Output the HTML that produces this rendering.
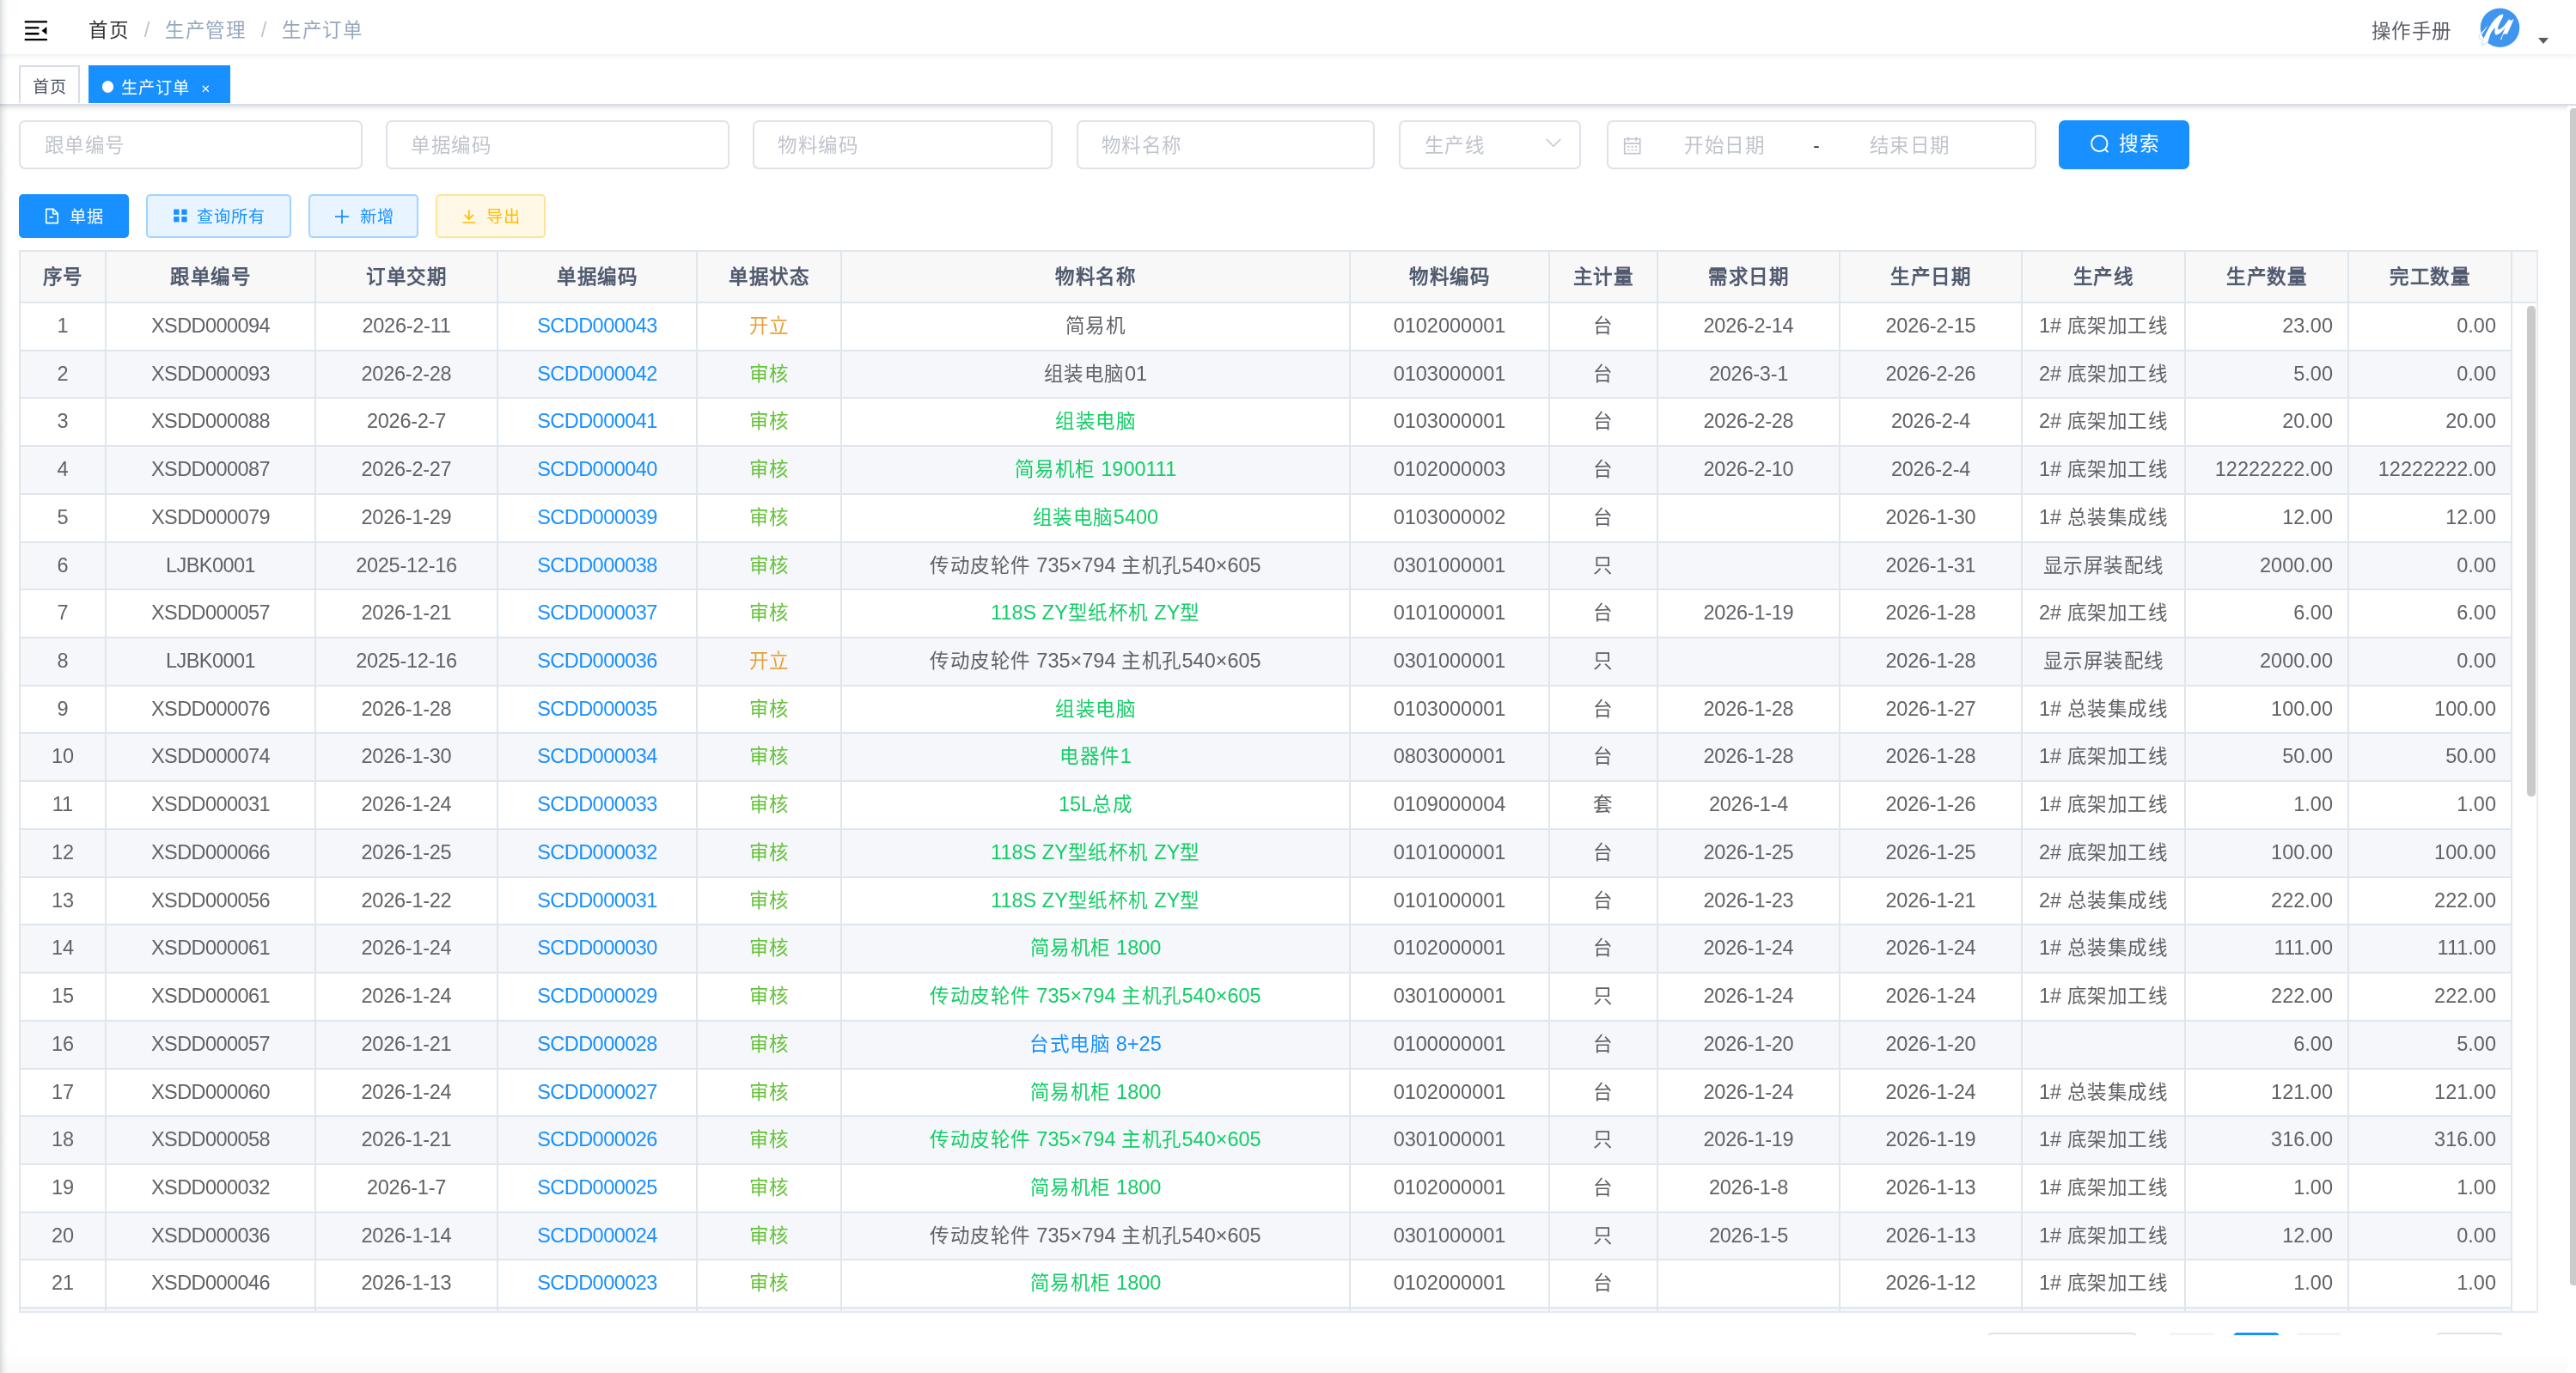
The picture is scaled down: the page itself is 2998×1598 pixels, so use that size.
<!DOCTYPE html>
<html lang="zh-CN"><head><meta charset="utf-8"><title>生产订单</title>
<style>
*{box-sizing:border-box;margin:0;padding:0}
html,body{width:2998px;height:1598px;overflow:hidden;background:#fff}
body{position:relative;font-family:"Liberation Sans",sans-serif;color:#606266;font-size:23.5px}
.abs{position:absolute}
/* navbar */
.nav{position:absolute;left:0;top:0;width:2998px;height:63px;background:#fff;box-shadow:0 2px 7px rgba(0,21,41,.08);z-index:5}
.hb{position:absolute;left:25px;top:19px;width:33.6px;height:33.6px;transform:rotate(180deg)}
.bc{position:absolute;left:103px;top:0;height:63px;line-height:70.5px;white-space:nowrap;font-size:23.5px;color:#97a8be}
.bc b{font-weight:400;color:#303133}
.bc i{display:inline-block;width:42px;text-align:center;font-style:normal;font-weight:400;color:#c0c4cc}
.man{position:absolute;left:2759.5px;top:0;line-height:74.5px;font-size:23.5px;color:#5a5e66;white-space:nowrap}
.ava{position:absolute;left:2875px;top:2px;width:70px;height:60px}
.caret{position:absolute;left:2954px;top:44px;width:0;height:0;border-left:6.2px solid transparent;border-right:6.2px solid transparent;border-top:7.4px solid #555a64}
/* tags */
.tags{position:absolute;left:0;top:63px;width:2998px;height:60px;background:#fff;border-bottom:2px solid #d8dce5;box-shadow:0 2px 6px rgba(0,0,0,.13),0 0 5px rgba(0,0,0,.04);z-index:4}
.tag{position:absolute;top:13px;height:44px;line-height:53px;font-size:20px;white-space:nowrap}
.t1{left:22px;width:71px;border:2px solid #d8dce5;color:#495060;text-align:center;line-height:48.5px;height:44px;border-bottom:0}
.t2{left:103px;width:165px;background:#1890ff;color:#fff}
.t2 .dot{position:absolute;left:15.8px;top:18.2px;width:13.4px;height:13.4px;border-radius:50%;background:#fff}
.t2 span{position:absolute;left:37.7px;top:0}
.t2 svg{position:absolute;left:131.6px;top:23.2px;width:8.6px;height:8.6px}
/* main */
.inp{position:absolute;top:140px;height:56.5px;border:2px solid #dfe2e8;border-radius:7px;background:#fff;color:#c0c4cc;font-size:23.5px;line-height:55px;padding-left:27.3px;white-space:nowrap}
.btn{position:absolute;top:226px;height:51px;border-radius:5px;font-size:20px;line-height:50px;white-space:nowrap;border:2px solid transparent}
.btn span{position:absolute;top:0}
.btn svg{position:absolute}
.b1{left:22px;width:128px;background:#1890ff;color:#fff;border-color:#1890ff}
.b2{left:170.4px;width:168.2px;background:#e8f4ff;color:#1890ff;border-color:#a3d3ff}
.b3{left:359.1px;width:127.7px;background:#e8f4ff;color:#1890ff;border-color:#a3d3ff}
.b4{left:507.3px;width:127.4px;background:#fff8e6;color:#ffba00;border-color:#ffe399}
.sbtn{position:absolute;left:2396px;top:140px;width:152px;height:57px;border-radius:7px;background:#1890ff;color:#fff;font-size:23.5px;line-height:56px}
/* table */
.tw{position:absolute;left:22px;top:291px;width:2932px;height:1237px;overflow:hidden;border-left:2px solid #dfe6ec;border-top:2px solid #dfe6ec}
.th{position:absolute;left:0;top:0;width:2930px;height:60px;background:#f8f8f9;border-bottom:2px solid #dfe6ec;display:flex;font-weight:700;color:#515a6e}
.th .c{height:58px;line-height:59px;border-right:2px solid #dfe6ec;text-align:center}
.tr{position:absolute;left:0;width:2900px;height:55.72px;display:flex;background:#fff;border-bottom:2px solid #dfe6ec}
.tr.s{background:#f5f7fa}
.c{flex:none;white-space:nowrap;overflow:hidden}
.tr .c{height:100%;line-height:53.6px;border-right:2px solid #dfe6ec;text-align:center}
.tr .r{text-align:right;padding-right:17px}
.k{letter-spacing:-.55px}
.d{letter-spacing:-.25px}
.l{color:#1890ff;letter-spacing:-.55px}
.o{color:#e6a23c}.v{color:#67c23a}
.ng{color:#13ce66}.nb{color:#1890ff}
.trb{position:absolute;right:0;top:0;width:2px;height:100%;background:#e6ebf5}
.tbb{position:absolute;left:0;right:0;bottom:0;height:2px;background:#e3e9f1}
.isb{position:absolute;left:2917px;top:63px;width:10px;height:571px;border-radius:4.5px;background:#cacaca}
/* pagination sliver */
.pg{position:absolute;top:1551px;height:30px;border-radius:5px}
.clip{position:absolute;left:0;top:1554px;width:2998px;height:44px;background:linear-gradient(#fff 45%,#fafafa);z-index:3}
/* edges */
.lsh{position:absolute;left:0;top:0;width:9px;height:1598px;background:linear-gradient(90deg,rgba(0,21,41,.15),rgba(0,21,41,.06) 42%,rgba(0,21,41,0));z-index:9}
.psb{position:absolute;left:2991px;top:126px;width:10px;height:1370px;border-radius:4px;background:#cbcbcb;z-index:5}

#app{position:absolute;left:0;top:0;width:2998px;height:1598px;overflow:hidden;will-change:transform;background:#fff}
.ptr{position:absolute;left:2988px;top:123px;width:10px;height:1475px;background:#fff;z-index:4}
.z{font-size:22.5px;letter-spacing:.5px}
.th .c{font-size:22.5px;letter-spacing:.5px}
.bc{font-size:22.5px!important;letter-spacing:.5px}
.bc i{letter-spacing:0;font-size:23.5px}
.man{font-size:22.5px!important;letter-spacing:.5px}
.inp{font-size:22.5px!important;letter-spacing:.5px}
.sbtn{font-size:22.5px!important;letter-spacing:.5px}
.tag,.btn{font-size:19.2px!important;letter-spacing:1px}

</style></head>
<body>
<div id="app">
<div class="nav">
  <svg class="hb" viewBox="0 0 1024 1024"><path fill="#000" d="M408 442h480c4.400 0 8-3.600 8-8v-56c0-4.400-3.600-8-8-8H408c-4.400 0-8 3.600-8 8v56c0 4.400 3.600 8 8 8zm-8 204c0 4.400 3.600 8 8 8h480c4.400 0 8-3.600 8-8v-56c0-4.400-3.600-8-8-8H408c-4.400 0-8 3.600-8 8v56zm504-486H120c-4.400 0-8 3.600-8 8v56c0 4.400 3.600 8 8 8h784c4.400 0 8-3.600 8-8v-56c0-4.400-3.600-8-8-8zm0 632H120c-4.400 0-8 3.600-8 8v56c0 4.400 3.600 8 8 8h784c4.400 0 8-3.600 8-8v-56c0-4.400-3.600-8-8-8zM142.400 642.100L298.700 519a8.840 8.840 0 0 0 0-13.900L142.400 381.900c-5.800-4.600-14.400-.5-14.400 6.900v246.300a8.900 8.900 0 0 0 14.400 7z"/></svg>
  <div class="bc"><b>首页</b><i>/</i>生产管理<i>/</i>生产订单</div>
  <div class="man">操作手册</div>
  <svg class="ava" viewBox="0 0 1602 1373">
    <circle cx="790" cy="692" r="522" fill="#4095ee"/>
    <path fill="#fff" d="M470 1085C485 1000 520 890 575 790C600 745 640 710 668 692C650 740 640 800 655 845C670 885 700 890 740 870C800 840 880 760 935 690C905 750 870 830 850 890C835 935 810 975 800 1000L835 1005C845 960 860 910 880 870L905 860L980 865C1010 800 1060 700 1100 600C1120 550 1145 490 1160 455L1100 492L1068 502L1040 465C1010 490 985 530 950 575C900 640 830 710 770 740C745 750 730 730 735 690C745 630 800 530 850 440C870 400 890 365 870 345C850 330 810 340 780 360C700 410 620 500 560 590C500 690 420 840 350 980C330 1020 310 1060 300 1090L330 1150L440 1090Z"/>
    <path fill="#fff" d="M472 622C450 665 385 760 318 862L272 850C330 785 405 700 472 622Z"/>
    <path fill="none" stroke="#4095ee" stroke-opacity=".7" stroke-width="13" stroke-dasharray="30 12" d="M285 835C235 880 215 935 240 980C262 1010 300 990 330 955M305 1000L345 1040L285 1100L345 1120L310 1180L445 1085"/>
  </svg>
  <div class="caret"></div>
</div>
<div class="tags">
  <div class="tag t1">首页</div>
  <div class="tag t2"><div class="dot"></div><span>生产订单</span><svg viewBox="0 0 9 9"><path d="M.8.8l7.400 7.400M8.200.8L.8 8.200" stroke="#fff" stroke-width="1.300" fill="none"/></svg></div>
</div>

<div class="inp" style="left:22.3px;width:399.3px">跟单编号</div>
<div class="inp" style="left:449px;width:399.600px">单据编码</div>
<div class="inp" style="left:875.9px;width:349.400px">物料编码</div>
<div class="inp" style="left:1252.5px;width:347.900px">物料名称</div>
<div class="inp" style="left:1628.3px;width:211.300px">生产线<svg class="abs" style="left:167px;top:16px;width:22px;height:16px" viewBox="0 0 22 16"><path d="M2.700 3.800L11 12.200L19.300 3.800" fill="none" stroke="#c0c4cc" stroke-width="1.500"/></svg></div>
<div class="inp" style="left:1870.3px;width:499.400px;padding-left:0">
  <svg class="abs" style="left:15.5px;top:15.5px;width:23px;height:23px" viewBox="0 0 24 24" fill="none" stroke="#c0c4cc" stroke-width="1.700"><rect x="2.800" y="3.800" width="18.800" height="17.800"/><path d="M2.800 9.300h18.800M7.500 1.500v5M16.900 1.500v5"/><path d="M6.300 13.300h2.600M10.900 13.300h2.600M15.500 13.300h2.600M6.300 17.300h2.600M10.900 17.300h2.600M15.500 17.300h2.600" stroke-width="1.400"/></svg>
  <span class="abs" style="left:88px;top:0">开始日期</span><span class="abs" style="left:238px;top:0;color:#303133">-</span><span class="abs" style="left:303.500px;top:0">结束日期</span>
</div>
<div class="sbtn"><svg class="abs" style="left:35px;top:15px;width:26px;height:26px" viewBox="0 0 26 26" fill="none" stroke="#fff" stroke-width="1.900"><circle cx="12.300" cy="12" r="9.200"/><path d="M18.800 18.500l3.600 3.600"/></svg><span class="abs" style="left:70px;top:0">搜索</span></div>

<div class="btn b1"><svg style="left:27.2px;top:12.8px;width:19px;height:21px" viewBox="0 0 20 22" fill="none" stroke="#fff" stroke-width="1.700" stroke-linejoin="round"><path d="M2.900 2.500h8.700l5.500 5.500v11.500H2.900z"/><path d="M11.300 2.700v5.600h5.600M6.800 12.500h4.600"/></svg><span style="left:56.8px">单据</span></div>
<div class="btn b2"><svg style="left:29.6px;top:15.2px;width:16px;height:16px" viewBox="0 0 16 16" fill="#1890ff"><rect x=".2" y=".6" width="6.300" height="6.300"/><rect x="9.300" y=".6" width="6.300" height="6.300"/><rect x=".2" y="9.100" width="6.300" height="6.300"/><rect x="9.300" y="9.100" width="6.300" height="6.300"/></svg><span style="left:57px">查询所有</span></div>
<div class="btn b3"><svg style="left:28px;top:15px;width:18px;height:18px" viewBox="0 0 18 18" fill="none" stroke="#1890ff" stroke-width="1.700"><path d="M1 9.100h16M9 1v16.200"/></svg><span style="left:57.6px">新增</span></div>
<div class="btn b4"><svg style="left:28px;top:15px;width:18px;height:18px" viewBox="0 0 18 18" fill="none" stroke="#ffba00" stroke-width="1.700"><path d="M1.500 16h14.600M8.800 1.500v10.500M3.800 7l5 5.200l5-5.200"/></svg><span style="left:56.6px">导出</span></div>

<div class="tw">
  <div class="th"><div class="c" style="width:100px">序号</div><div class="c" style="width:244px">跟单编号</div><div class="c" style="width:212px">订单交期</div><div class="c" style="width:232px">单据编码</div><div class="c" style="width:168px">单据状态</div><div class="c" style="width:592px">物料名称</div><div class="c" style="width:232px">物料编码</div><div class="c" style="width:126px">主计量</div><div class="c" style="width:212px">需求日期</div><div class="c" style="width:212px">生产日期</div><div class="c" style="width:190px">生产线</div><div class="c" style="width:190px">生产数量</div><div class="c" style="width:190px">完工数量</div><div class="c" style="width:30px;border-right:0"></div></div>
<div class="tr" style="top:60.00px"><div class="c" style="width:100px">1</div><div class="c k" style="width:244px">XSDD000094</div><div class="c d" style="width:212px">2026-2-11</div><div class="c k l" style="width:232px">SCDD000043</div><div class="c o" style="width:168px"><span class="z">开立</span></div><div class="c nd" style="width:592px"><span class="z">简易机</span></div><div class="c" style="width:232px">0102000001</div><div class="c" style="width:126px"><span class="z">台</span></div><div class="c d" style="width:212px">2026-2-14</div><div class="c d" style="width:212px">2026-2-15</div><div class="c" style="width:190px">1# <span class="z">底架加工线</span></div><div class="c r" style="width:190px">23.00</div><div class="c r" style="width:190px">0.00</div></div>
<div class="tr s" style="top:115.72px"><div class="c" style="width:100px">2</div><div class="c k" style="width:244px">XSDD000093</div><div class="c d" style="width:212px">2026-2-28</div><div class="c k l" style="width:232px">SCDD000042</div><div class="c v" style="width:168px"><span class="z">审核</span></div><div class="c nd" style="width:592px"><span class="z">组装电脑</span>01</div><div class="c" style="width:232px">0103000001</div><div class="c" style="width:126px"><span class="z">台</span></div><div class="c d" style="width:212px">2026-3-1</div><div class="c d" style="width:212px">2026-2-26</div><div class="c" style="width:190px">2# <span class="z">底架加工线</span></div><div class="c r" style="width:190px">5.00</div><div class="c r" style="width:190px">0.00</div></div>
<div class="tr" style="top:171.44px"><div class="c" style="width:100px">3</div><div class="c k" style="width:244px">XSDD000088</div><div class="c d" style="width:212px">2026-2-7</div><div class="c k l" style="width:232px">SCDD000041</div><div class="c v" style="width:168px"><span class="z">审核</span></div><div class="c ng" style="width:592px"><span class="z">组装电脑</span></div><div class="c" style="width:232px">0103000001</div><div class="c" style="width:126px"><span class="z">台</span></div><div class="c d" style="width:212px">2026-2-28</div><div class="c d" style="width:212px">2026-2-4</div><div class="c" style="width:190px">2# <span class="z">底架加工线</span></div><div class="c r" style="width:190px">20.00</div><div class="c r" style="width:190px">20.00</div></div>
<div class="tr s" style="top:227.16px"><div class="c" style="width:100px">4</div><div class="c k" style="width:244px">XSDD000087</div><div class="c d" style="width:212px">2026-2-27</div><div class="c k l" style="width:232px">SCDD000040</div><div class="c v" style="width:168px"><span class="z">审核</span></div><div class="c ng" style="width:592px"><span class="z">简易机柜</span> 1900111</div><div class="c" style="width:232px">0102000003</div><div class="c" style="width:126px"><span class="z">台</span></div><div class="c d" style="width:212px">2026-2-10</div><div class="c d" style="width:212px">2026-2-4</div><div class="c" style="width:190px">1# <span class="z">底架加工线</span></div><div class="c r" style="width:190px">12222222.00</div><div class="c r" style="width:190px">12222222.00</div></div>
<div class="tr" style="top:282.88px"><div class="c" style="width:100px">5</div><div class="c k" style="width:244px">XSDD000079</div><div class="c d" style="width:212px">2026-1-29</div><div class="c k l" style="width:232px">SCDD000039</div><div class="c v" style="width:168px"><span class="z">审核</span></div><div class="c ng" style="width:592px"><span class="z">组装电脑</span>5400</div><div class="c" style="width:232px">0103000002</div><div class="c" style="width:126px"><span class="z">台</span></div><div class="c d" style="width:212px"></div><div class="c d" style="width:212px">2026-1-30</div><div class="c" style="width:190px">1# <span class="z">总装集成线</span></div><div class="c r" style="width:190px">12.00</div><div class="c r" style="width:190px">12.00</div></div>
<div class="tr s" style="top:338.60px"><div class="c" style="width:100px">6</div><div class="c k" style="width:244px">LJBK0001</div><div class="c d" style="width:212px">2025-12-16</div><div class="c k l" style="width:232px">SCDD000038</div><div class="c v" style="width:168px"><span class="z">审核</span></div><div class="c nd" style="width:592px"><span class="z">传动皮轮件</span> 735×794 <span class="z">主机孔</span>540×605</div><div class="c" style="width:232px">0301000001</div><div class="c" style="width:126px"><span class="z">只</span></div><div class="c d" style="width:212px"></div><div class="c d" style="width:212px">2026-1-31</div><div class="c" style="width:190px"><span class="z">显示屏装配线</span></div><div class="c r" style="width:190px">2000.00</div><div class="c r" style="width:190px">0.00</div></div>
<div class="tr" style="top:394.32px"><div class="c" style="width:100px">7</div><div class="c k" style="width:244px">XSDD000057</div><div class="c d" style="width:212px">2026-1-21</div><div class="c k l" style="width:232px">SCDD000037</div><div class="c v" style="width:168px"><span class="z">审核</span></div><div class="c ng" style="width:592px">118S ZY<span class="z">型纸杯机</span> ZY<span class="z">型</span></div><div class="c" style="width:232px">0101000001</div><div class="c" style="width:126px"><span class="z">台</span></div><div class="c d" style="width:212px">2026-1-19</div><div class="c d" style="width:212px">2026-1-28</div><div class="c" style="width:190px">2# <span class="z">底架加工线</span></div><div class="c r" style="width:190px">6.00</div><div class="c r" style="width:190px">6.00</div></div>
<div class="tr s" style="top:450.04px"><div class="c" style="width:100px">8</div><div class="c k" style="width:244px">LJBK0001</div><div class="c d" style="width:212px">2025-12-16</div><div class="c k l" style="width:232px">SCDD000036</div><div class="c o" style="width:168px"><span class="z">开立</span></div><div class="c nd" style="width:592px"><span class="z">传动皮轮件</span> 735×794 <span class="z">主机孔</span>540×605</div><div class="c" style="width:232px">0301000001</div><div class="c" style="width:126px"><span class="z">只</span></div><div class="c d" style="width:212px"></div><div class="c d" style="width:212px">2026-1-28</div><div class="c" style="width:190px"><span class="z">显示屏装配线</span></div><div class="c r" style="width:190px">2000.00</div><div class="c r" style="width:190px">0.00</div></div>
<div class="tr" style="top:505.76px"><div class="c" style="width:100px">9</div><div class="c k" style="width:244px">XSDD000076</div><div class="c d" style="width:212px">2026-1-28</div><div class="c k l" style="width:232px">SCDD000035</div><div class="c v" style="width:168px"><span class="z">审核</span></div><div class="c ng" style="width:592px"><span class="z">组装电脑</span></div><div class="c" style="width:232px">0103000001</div><div class="c" style="width:126px"><span class="z">台</span></div><div class="c d" style="width:212px">2026-1-28</div><div class="c d" style="width:212px">2026-1-27</div><div class="c" style="width:190px">1# <span class="z">总装集成线</span></div><div class="c r" style="width:190px">100.00</div><div class="c r" style="width:190px">100.00</div></div>
<div class="tr s" style="top:561.48px"><div class="c" style="width:100px">10</div><div class="c k" style="width:244px">XSDD000074</div><div class="c d" style="width:212px">2026-1-30</div><div class="c k l" style="width:232px">SCDD000034</div><div class="c v" style="width:168px"><span class="z">审核</span></div><div class="c ng" style="width:592px"><span class="z">电器件</span>1</div><div class="c" style="width:232px">0803000001</div><div class="c" style="width:126px"><span class="z">台</span></div><div class="c d" style="width:212px">2026-1-28</div><div class="c d" style="width:212px">2026-1-28</div><div class="c" style="width:190px">1# <span class="z">底架加工线</span></div><div class="c r" style="width:190px">50.00</div><div class="c r" style="width:190px">50.00</div></div>
<div class="tr" style="top:617.20px"><div class="c" style="width:100px">11</div><div class="c k" style="width:244px">XSDD000031</div><div class="c d" style="width:212px">2026-1-24</div><div class="c k l" style="width:232px">SCDD000033</div><div class="c v" style="width:168px"><span class="z">审核</span></div><div class="c ng" style="width:592px">15L<span class="z">总成</span></div><div class="c" style="width:232px">0109000004</div><div class="c" style="width:126px"><span class="z">套</span></div><div class="c d" style="width:212px">2026-1-4</div><div class="c d" style="width:212px">2026-1-26</div><div class="c" style="width:190px">1# <span class="z">底架加工线</span></div><div class="c r" style="width:190px">1.00</div><div class="c r" style="width:190px">1.00</div></div>
<div class="tr s" style="top:672.92px"><div class="c" style="width:100px">12</div><div class="c k" style="width:244px">XSDD000066</div><div class="c d" style="width:212px">2026-1-25</div><div class="c k l" style="width:232px">SCDD000032</div><div class="c v" style="width:168px"><span class="z">审核</span></div><div class="c ng" style="width:592px">118S ZY<span class="z">型纸杯机</span> ZY<span class="z">型</span></div><div class="c" style="width:232px">0101000001</div><div class="c" style="width:126px"><span class="z">台</span></div><div class="c d" style="width:212px">2026-1-25</div><div class="c d" style="width:212px">2026-1-25</div><div class="c" style="width:190px">2# <span class="z">底架加工线</span></div><div class="c r" style="width:190px">100.00</div><div class="c r" style="width:190px">100.00</div></div>
<div class="tr" style="top:728.64px"><div class="c" style="width:100px">13</div><div class="c k" style="width:244px">XSDD000056</div><div class="c d" style="width:212px">2026-1-22</div><div class="c k l" style="width:232px">SCDD000031</div><div class="c v" style="width:168px"><span class="z">审核</span></div><div class="c ng" style="width:592px">118S ZY<span class="z">型纸杯机</span> ZY<span class="z">型</span></div><div class="c" style="width:232px">0101000001</div><div class="c" style="width:126px"><span class="z">台</span></div><div class="c d" style="width:212px">2026-1-23</div><div class="c d" style="width:212px">2026-1-21</div><div class="c" style="width:190px">2# <span class="z">总装集成线</span></div><div class="c r" style="width:190px">222.00</div><div class="c r" style="width:190px">222.00</div></div>
<div class="tr s" style="top:784.36px"><div class="c" style="width:100px">14</div><div class="c k" style="width:244px">XSDD000061</div><div class="c d" style="width:212px">2026-1-24</div><div class="c k l" style="width:232px">SCDD000030</div><div class="c v" style="width:168px"><span class="z">审核</span></div><div class="c ng" style="width:592px"><span class="z">简易机柜</span> 1800</div><div class="c" style="width:232px">0102000001</div><div class="c" style="width:126px"><span class="z">台</span></div><div class="c d" style="width:212px">2026-1-24</div><div class="c d" style="width:212px">2026-1-24</div><div class="c" style="width:190px">1# <span class="z">总装集成线</span></div><div class="c r" style="width:190px">111.00</div><div class="c r" style="width:190px">111.00</div></div>
<div class="tr" style="top:840.08px"><div class="c" style="width:100px">15</div><div class="c k" style="width:244px">XSDD000061</div><div class="c d" style="width:212px">2026-1-24</div><div class="c k l" style="width:232px">SCDD000029</div><div class="c v" style="width:168px"><span class="z">审核</span></div><div class="c ng" style="width:592px"><span class="z">传动皮轮件</span> 735×794 <span class="z">主机孔</span>540×605</div><div class="c" style="width:232px">0301000001</div><div class="c" style="width:126px"><span class="z">只</span></div><div class="c d" style="width:212px">2026-1-24</div><div class="c d" style="width:212px">2026-1-24</div><div class="c" style="width:190px">1# <span class="z">底架加工线</span></div><div class="c r" style="width:190px">222.00</div><div class="c r" style="width:190px">222.00</div></div>
<div class="tr s" style="top:895.80px"><div class="c" style="width:100px">16</div><div class="c k" style="width:244px">XSDD000057</div><div class="c d" style="width:212px">2026-1-21</div><div class="c k l" style="width:232px">SCDD000028</div><div class="c v" style="width:168px"><span class="z">审核</span></div><div class="c nb" style="width:592px"><span class="z">台式电脑</span> 8+25</div><div class="c" style="width:232px">0100000001</div><div class="c" style="width:126px"><span class="z">台</span></div><div class="c d" style="width:212px">2026-1-20</div><div class="c d" style="width:212px">2026-1-20</div><div class="c" style="width:190px"></div><div class="c r" style="width:190px">6.00</div><div class="c r" style="width:190px">5.00</div></div>
<div class="tr" style="top:951.52px"><div class="c" style="width:100px">17</div><div class="c k" style="width:244px">XSDD000060</div><div class="c d" style="width:212px">2026-1-24</div><div class="c k l" style="width:232px">SCDD000027</div><div class="c v" style="width:168px"><span class="z">审核</span></div><div class="c ng" style="width:592px"><span class="z">简易机柜</span> 1800</div><div class="c" style="width:232px">0102000001</div><div class="c" style="width:126px"><span class="z">台</span></div><div class="c d" style="width:212px">2026-1-24</div><div class="c d" style="width:212px">2026-1-24</div><div class="c" style="width:190px">1# <span class="z">总装集成线</span></div><div class="c r" style="width:190px">121.00</div><div class="c r" style="width:190px">121.00</div></div>
<div class="tr s" style="top:1007.24px"><div class="c" style="width:100px">18</div><div class="c k" style="width:244px">XSDD000058</div><div class="c d" style="width:212px">2026-1-21</div><div class="c k l" style="width:232px">SCDD000026</div><div class="c v" style="width:168px"><span class="z">审核</span></div><div class="c ng" style="width:592px"><span class="z">传动皮轮件</span> 735×794 <span class="z">主机孔</span>540×605</div><div class="c" style="width:232px">0301000001</div><div class="c" style="width:126px"><span class="z">只</span></div><div class="c d" style="width:212px">2026-1-19</div><div class="c d" style="width:212px">2026-1-19</div><div class="c" style="width:190px">1# <span class="z">底架加工线</span></div><div class="c r" style="width:190px">316.00</div><div class="c r" style="width:190px">316.00</div></div>
<div class="tr" style="top:1062.96px"><div class="c" style="width:100px">19</div><div class="c k" style="width:244px">XSDD000032</div><div class="c d" style="width:212px">2026-1-7</div><div class="c k l" style="width:232px">SCDD000025</div><div class="c v" style="width:168px"><span class="z">审核</span></div><div class="c ng" style="width:592px"><span class="z">简易机柜</span> 1800</div><div class="c" style="width:232px">0102000001</div><div class="c" style="width:126px"><span class="z">台</span></div><div class="c d" style="width:212px">2026-1-8</div><div class="c d" style="width:212px">2026-1-13</div><div class="c" style="width:190px">1# <span class="z">底架加工线</span></div><div class="c r" style="width:190px">1.00</div><div class="c r" style="width:190px">1.00</div></div>
<div class="tr s" style="top:1118.68px"><div class="c" style="width:100px">20</div><div class="c k" style="width:244px">XSDD000036</div><div class="c d" style="width:212px">2026-1-14</div><div class="c k l" style="width:232px">SCDD000024</div><div class="c v" style="width:168px"><span class="z">审核</span></div><div class="c nd" style="width:592px"><span class="z">传动皮轮件</span> 735×794 <span class="z">主机孔</span>540×605</div><div class="c" style="width:232px">0301000001</div><div class="c" style="width:126px"><span class="z">只</span></div><div class="c d" style="width:212px">2026-1-5</div><div class="c d" style="width:212px">2026-1-13</div><div class="c" style="width:190px">1# <span class="z">底架加工线</span></div><div class="c r" style="width:190px">12.00</div><div class="c r" style="width:190px">0.00</div></div>
<div class="tr" style="top:1174.40px"><div class="c" style="width:100px">21</div><div class="c k" style="width:244px">XSDD000046</div><div class="c d" style="width:212px">2026-1-13</div><div class="c k l" style="width:232px">SCDD000023</div><div class="c v" style="width:168px"><span class="z">审核</span></div><div class="c ng" style="width:592px"><span class="z">简易机柜</span> 1800</div><div class="c" style="width:232px">0102000001</div><div class="c" style="width:126px"><span class="z">台</span></div><div class="c d" style="width:212px"></div><div class="c d" style="width:212px">2026-1-12</div><div class="c" style="width:190px">1# <span class="z">底架加工线</span></div><div class="c r" style="width:190px">1.00</div><div class="c r" style="width:190px">1.00</div></div>
<div class="tr s" style="top:1230.12px"><div class="c" style="width:100px">22</div><div class="c k" style="width:244px"></div><div class="c d" style="width:212px"></div><div class="c k l" style="width:232px"></div><div class="c v" style="width:168px"></div><div class="c nd" style="width:592px"></div><div class="c" style="width:232px"></div><div class="c" style="width:126px"></div><div class="c d" style="width:212px"></div><div class="c d" style="width:212px"></div><div class="c" style="width:190px"></div><div class="c r" style="width:190px"></div><div class="c r" style="width:190px"></div></div>
  <div class="isb"></div>
  <div class="tbb"></div>
  <div class="trb"></div>
</div>

<div class="pg" style="left:2313px;width:174px;border:2px solid #dfe2e8"></div>
<div class="pg" style="left:2524px;width:54px;background:#f4f4f5"></div>
<div class="pg" style="left:2598.500px;width:54px;background:#1890ff"></div>
<div class="pg" style="left:2671.500px;width:54px;background:#f4f4f5"></div>
<div class="pg" style="left:2834.500px;width:78px;border:2px solid #dfe2e8"></div>
<div class="clip"></div>
<div class="ptr"></div>
<div class="psb"></div>
<div class="lsh"></div>
</div>
</body></html>
